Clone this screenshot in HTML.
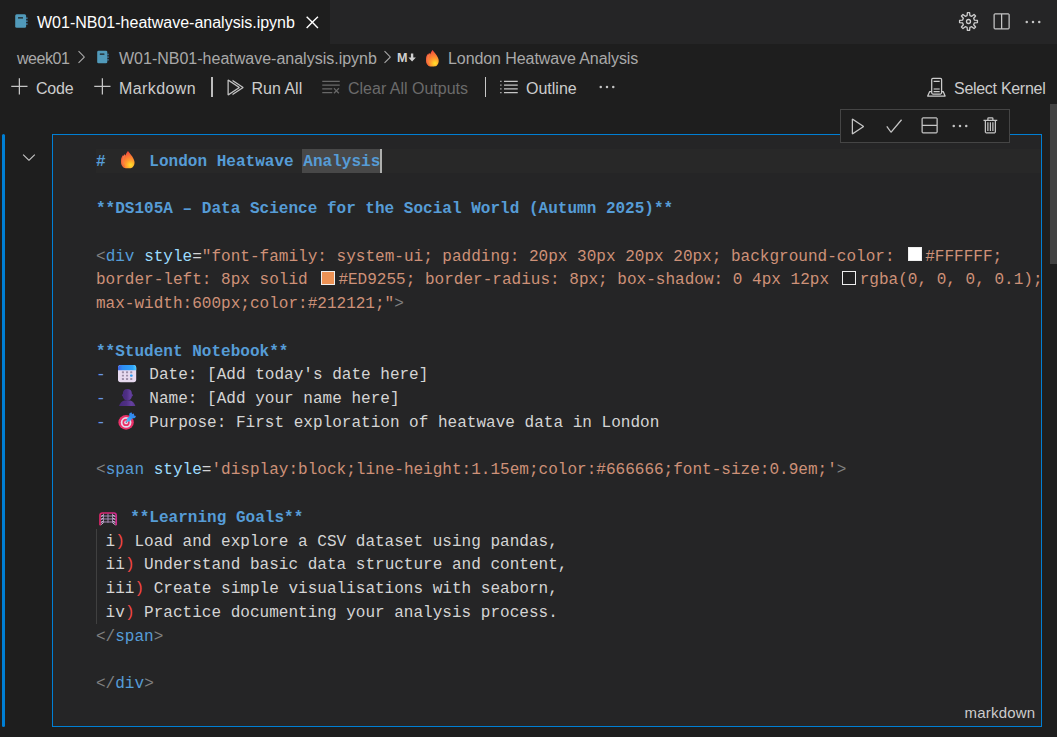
<!DOCTYPE html>
<html>
<head>
<meta charset="utf-8">
<title>W01-NB01-heatwave-analysis.ipynb</title>
<style>
html,body{margin:0;padding:0;}
body{width:1057px;height:737px;overflow:hidden;background:#1e1e1e;position:relative;
  font-family:"Liberation Sans",sans-serif;font-size:16px;color:#cccccc;}
.abs{position:absolute;}
.t{position:absolute;white-space:pre;line-height:20px;height:20px;}
svg{position:absolute;display:block;overflow:visible;}
/* tab bar */
#tabbar{left:0;top:0;width:1057px;height:44px;background:#252526;}
#tab{left:0;top:0;width:330px;height:44px;background:#1e1e1e;}
/* editor */
#focusbar{left:2px;top:133.5px;width:3px;height:593.5px;background:#007fd4;border-radius:1.5px;}
#cell{left:52px;top:134px;width:988px;height:591px;border:1px solid #007fd4;background:#252526;}
#linehl{left:95.5px;top:149px;width:945.5px;height:23.6px;background:#282828;}
#code{left:96px;top:150.5px;font-family:"Liberation Mono",monospace;font-size:16.047px;line-height:23.75px;color:#d4d4d4;}
#code .l{height:23.75px;position:relative;white-space:pre;}
.b{color:#569cd6;font-weight:bold;}
.tg{color:#569cd6;}
.p{color:#808080;}
.a{color:#9cdcfe;}
.s{color:#ce9178;}
.li{color:#6796e6;}
.r{color:#f44747;}
.em{display:inline-block;width:24.5px;height:20px;vertical-align:top;}
.sw{display:inline-block;box-sizing:border-box;width:14.1px;height:14.5px;margin:0 3.5px;border:1.5px solid #eeeeee;vertical-align:top;position:relative;top:1.25px;}
#celltb{left:840px;top:109px;width:168px;height:32px;border:1px solid #454545;background:#1e1e1e;}
#scroll{left:1050px;top:104px;width:7px;height:160px;background:#424242;}
</style>
</head>
<body>

<!-- TAB BAR -->
<div class="abs" id="tabbar"></div>
<div class="abs" id="tab"></div>
<svg id="nbicon1" style="left:15px;top:14px" width="14" height="14" viewBox="0 0 14 14">
  <rect x="0.2" y="0.2" width="10.9" height="13.6" rx="1.5" fill="#519aba"/>
  <g fill="#4a96c8" opacity="0.75"><rect x="11.1" y="3.4" width="1.5" height="1.7"/><rect x="11.1" y="6.3" width="1.5" height="1.7"/><rect x="11.1" y="9.2" width="1.5" height="1.7"/></g>
  <rect x="3" y="3.300" width="5" height="1.300" rx=".3" fill="#1e1e1e"/>
</svg>
<div class="t" id="tabtitle" style="left:37px;top:13px;color:#ffffff;">W01-NB01-heatwave-analysis.ipynb</div>
<svg id="tabclose" style="left:301px;top:10.6px" width="22.6" height="22.6" viewBox="0 0 16 16"><path fill="#ffffff" d="M8 8.707l3.646 3.647.708-.707L8.707 8l3.647-3.646-.707-.708L8 7.293 4.354 3.646l-.707.708L7.293 8l-3.646 3.646.707.708L8 8.707z"/></svg>

<!-- top-right actions -->
<svg id="gear" style="left:958.9px;top:12px" width="19" height="19" viewBox="0 0 19 19" fill="none" stroke="#cccccc" stroke-width="1.3">
  <circle cx="9.5" cy="9.5" r="2"/>
  <path d="M8.13 3.56 L8.40 0.57 L10.60 0.57 L10.87 3.56 L12.73 4.33 L15.04 2.41 L16.59 3.96 L14.67 6.27 L15.44 8.13 L18.43 8.40 L18.43 10.60 L15.44 10.87 L14.67 12.73 L16.59 15.04 L15.04 16.59 L12.73 14.67 L10.87 15.44 L10.60 18.43 L8.40 18.43 L8.13 15.44 L6.27 14.67 L3.96 16.59 L2.41 15.04 L4.33 12.73 L3.56 10.87 L0.57 10.60 L0.57 8.40 L3.56 8.13 L4.33 6.27 L2.41 3.96 L3.96 2.41 L6.27 4.33Z" stroke-linejoin="round"/>
</svg>
<svg id="splited" style="left:991.3px;top:12px" width="20" height="20" viewBox="0 0 16 16"><path fill="#c5c5c5" d="M14 1H3L2 2v11l1 1h11l1-1V2l-1-1zM8 13H3V2h5v11zm6 0H9V2h5v11z"/></svg>
<svg id="more1" style="left:1023px;top:12px" width="20" height="20" viewBox="0 0 16 16"><path fill="#c5c5c5" d="M4 8a1 1 0 1 1-2 0 1 1 0 0 1 2 0zm5 0a1 1 0 1 1-2 0 1 1 0 0 1 2 0zm5 0a1 1 0 1 1-2 0 1 1 0 0 1 2 0z"/></svg>

<!-- BREADCRUMBS -->
<div class="t" id="bc1" style="left:17px;top:49px;color:#a9a9a9;letter-spacing:-0.45px;">week01</div>
<svg id="bcch1" style="left:71.3px;top:47px" width="20" height="20" viewBox="0 0 16 16"><path fill="#a9a9a9" d="M10.072 8.024L5.715 3.667l.618-.62L11 7.716v.618L6.333 13l-.618-.619 4.357-4.357z"/></svg>
<svg id="nbicon2" style="left:97px;top:50px" width="13" height="14" viewBox="0 0 14 14">
  <rect x="0.2" y="0.2" width="10.9" height="13.6" rx="1.5" fill="#519aba"/>
  <g fill="#4a96c8" opacity="0.75"><rect x="11.1" y="3.4" width="1.5" height="1.7"/><rect x="11.1" y="6.3" width="1.5" height="1.7"/><rect x="11.1" y="9.2" width="1.5" height="1.7"/></g>
  <rect x="3" y="3.300" width="5" height="1.300" rx=".3" fill="#1e1e1e"/>
</svg>
<div class="t" id="bc2" style="left:119px;top:49px;color:#a9a9a9;">W01-NB01-heatwave-analysis.ipynb</div>
<svg id="bcch2" style="left:376.8px;top:47px" width="20" height="20" viewBox="0 0 16 16"><path fill="#a9a9a9" d="M10.072 8.024L5.715 3.667l.618-.62L11 7.716v.618L6.333 13l-.618-.619 4.357-4.357z"/></svg>
<div class="t" id="mdicon" style="left:397px;top:48px;font-weight:bold;font-size:12.6px;color:#d0d0d0;">M</div>
<svg id="mdarrow" style="left:407.8px;top:53px" width="8.2" height="9" viewBox="0 0 9 9"><path fill="#d0d0d0" d="M3.2 0h2.6v4.6H8.6L4.5 9 .4 4.6h2.8z"/></svg>
<svg id="bcfire" style="left:425.6px;top:49.6px" width="12.7" height="16.4" viewBox="0 0 13.5 17.25" preserveAspectRatio="none"><use href="#fireg"/></svg>
<div class="t" id="bc3" style="left:448px;top:49px;color:#a9a9a9;letter-spacing:-0.08px;">London Heatwave Analysis</div>

<!-- NOTEBOOK TOOLBAR -->
<svg id="plus1" style="left:9.5px;top:77px" width="20" height="20" viewBox="0 0 16 16"><path fill="#c5c5c5" d="M14 7v1H8v6H7V8H1V7h6V1h1v6h6z"/></svg>
<div class="t" id="tb1" style="left:36px;top:79px;letter-spacing:-0.2px;">Code</div>
<svg id="plus2" style="left:92.5px;top:77px" width="20" height="20" viewBox="0 0 16 16"><path fill="#c5c5c5" d="M14 7v1H8v6H7V8H1V7h6V1h1v6h6z"/></svg>
<div class="t" id="tb2" style="left:119px;top:79px;letter-spacing:0.4px;">Markdown</div>
<div class="abs" style="left:211px;top:77px;width:2px;height:20px;background:#bdbdbd;"></div>
<svg id="runall" style="left:225px;top:77px" width="20" height="20" viewBox="0 0 16 16"><path fill="#c5c5c5" d="M2.78 2L2 2.41v12l.78.42 9-6V8l-9-6zM3 13.48V3.35l7.6 5.07L3 13.48z"/><path fill="#c5c5c5" d="M6 14.683l8.78-5.853V8L6 2.147V3.35l7.6 5.07L6 13.48v1.203z"/></svg>
<div class="t" id="tb3" style="left:251.5px;top:79px;">Run All</div>
<svg id="clearall" style="left:321px;top:77px" width="20" height="20" viewBox="0 0 16 16"><path fill="#686868" d="M10 12.6l.7.7 1.6-1.6 1.6 1.6.8-.7L13 11l1.700-1.6-.8-.8-1.600 1.700-1.600-1.700-.7.8 1.600 1.600-1.600 1.600zM1 4h14V3H1v1zm0 3h14V6H1v1zm8 2.500V9H1v1h8v-.5zM9 13v-1H1v1h8z"/></svg>
<div class="t" id="tb4" style="left:348px;top:79px;color:#6b6b6b;">Clear All Outputs</div>
<div class="abs" style="left:485px;top:77px;width:1px;height:20px;background:#c8c8c8;"></div>
<svg id="outline" style="left:499px;top:77px" width="20" height="20" viewBox="0 0 16 16"><path fill="#c5c5c5" d="M2 3H1v1h1V3zm0 3H1v1h1V6zM1 9h1v1H1V9zm1 3H1v1h1v-1zm2-9h11v1H4V3zm11 3H4v1h11V6zM4 9h11v1H4V9zm11 3H4v1h11v-1z"/></svg>
<div class="t" id="tb5" style="left:526px;top:79px;">Outline</div>
<svg id="more2" style="left:597px;top:77px" width="20" height="20" viewBox="0 0 16 16"><path fill="#c5c5c5" d="M4 8a1 1 0 1 1-2 0 1 1 0 0 1 2 0zm5 0a1 1 0 1 1-2 0 1 1 0 0 1 2 0zm5 0a1 1 0 1 1-2 0 1 1 0 0 1 2 0z"/></svg>
<svg id="kernel" style="left:927px;top:77px" width="20" height="20" viewBox="0 0 20 20" fill="none" stroke="#cccccc" stroke-width="1.25">
  <rect x="4.7" y="1.4" width="9.9" height="15.6" rx="1.2"/>
  <path d="M4.700 14.500H2.700L.7 19.100H18.100L16.200 14.500H14.600" stroke-linejoin="round"/>
  <path d="M6.600 4.400h6.100M6.600 14.500h6.100"/><path d="M6.600 12h6.100" stroke="#9a9a9a" stroke-width="1.6"/>
</svg>
<div class="t" id="tb6" style="left:954px;top:79px;letter-spacing:-0.29px;">Select Kernel</div>

<!-- CELL -->
<div class="abs" id="focusbar"></div>
<svg id="collapse" style="left:19px;top:147px" width="20" height="20" viewBox="0 0 16 16"><path fill="#c5c5c5" d="M7.976 10.072l4.357-4.357.62.618L8.284 11h-.618L3 6.333l.619-.618 4.357 4.357z"/></svg>
<div class="abs" id="cell"></div>
<div class="abs" id="linehl"></div>
<div class="abs" id="selhl" style="left:302px;top:149px;width:78px;height:23.75px;background:#484848;"></div>
<div class="abs" id="cursor" style="left:380px;top:149px;width:2px;height:23.75px;background:#aeafad;"></div>
<div class="abs" id="guide" style="left:96px;top:528.75px;width:1px;height:95px;background:#404040;"></div>

<svg width="0" height="0" style="position:absolute">
  <defs>
    <radialGradient id="fg1" gradientUnits="userSpaceOnUse" cx="9.6" cy="14" r="13.5"><stop offset="0" stop-color="#ffe22e"/><stop offset="0.15" stop-color="#ffc52a"/><stop offset="0.36" stop-color="#ff9c2e"/><stop offset="0.62" stop-color="#fb7a33"/><stop offset="0.85" stop-color="#f55e3a"/><stop offset="1" stop-color="#f0463c"/></radialGradient>
    <g id="fireg">
      <path fill="url(#fg1)" d="M6.940 0C8 1.200 9.200 2.800 9.900 3.800C11 5.200 12 6.600 12.600 7.900C13.300 9.200 13.600 10.400 13.560 11.600C13.500 13.500 12.800 15.200 11.600 16.300C10.800 17 10 17.250 8.500 17.250H5C3.500 17.250 2.600 16.800 1.700 15.600C.5 14 0 12.300 0 10.500C0 8.500 .5 6.300 1.700 4.450L2.500 5L3.200 3.200L4.500 4.400C5 2.800 6 1.200 6.940 0Z"/>
      <path fill="#ef5f3c" opacity="0.6" d="M3.200 3.200L4.500 4.400C3.600 6.500 3 8.500 3 11C3 13.500 3.600 15.600 4.800 17.240C3.400 17.200 2.500 16.700 1.700 15.600C.5 14 0 12.300 0 10.500C0 8.500 .5 6.300 1.700 4.450L2.500 5Z"/>
      <path fill="none" stroke="#ff9b55" stroke-width=".5" opacity=".8" d="M2.600 5.200C1.600 8 1.400 11 2.400 14M3.600 4.300C2.700 7 2.400 10 3 13"/>
    </g>
    <linearGradient id="calg" x1="0" y1="0" x2="1" y2="0"><stop offset="0" stop-color="#3d62e6"/><stop offset="0.25" stop-color="#2f8df2"/><stop offset="0.8" stop-color="#2fa4f8"/><stop offset="1" stop-color="#4fcbff"/></linearGradient>
    <linearGradient id="usrg" x1="0" y1="0" x2="1" y2="0"><stop offset="0" stop-color="#45297a"/><stop offset="0.45" stop-color="#4f2f84"/><stop offset="0.75" stop-color="#64409e"/><stop offset="1" stop-color="#5a3892"/></linearGradient>
    <linearGradient id="dartg" x1="0" y1="1" x2="1" y2="0"><stop offset="0" stop-color="#4fc8ff"/><stop offset="0.5" stop-color="#2f90f0"/><stop offset="1" stop-color="#3a7be8"/></linearGradient>
    <linearGradient id="goalg" gradientUnits="userSpaceOnUse" x1="0" y1="0" x2="18.2" y2="0"><stop offset="0" stop-color="#dc2668"/><stop offset="1" stop-color="#cc2c8e"/></linearGradient>
  </defs>
</svg>


<!-- emoji -->
<svg id="emfire" style="left:120.5px;top:150.75px" width="13.5" height="17.25" viewBox="0 0 13.5 17.25"><use href="#fireg"/></svg>
<svg id="emcal" style="left:118.1px;top:364.9px" width="18.2" height="17.3" viewBox="0 0 18.2 17.3">
  <rect x="0" y="0" width="18.2" height="17.3" rx="2.7" fill="#e7daef"/>
  <path d="M0 5.200V2.700A2.700 2.700 0 0 1 2.700 0H15.500A2.700 2.700 0 0 1 18.200 2.700V5.200Z" fill="url(#calg)"/>
  <g fill="#9c8ea8"><rect x="3.9" y="6.3" width="2.1" height="1.9" rx=".5"/><rect x="8" y="6.3" width="2.1" height="1.9" rx=".5"/><rect x="12.2" y="6.3" width="2.1" height="1.9" rx=".5"/>
  <rect x="3.9" y="9.8" width="2.1" height="1.8" rx=".5"/><rect x="8" y="9.8" width="2.1" height="1.8" rx=".5"/>
  <rect x="3.9" y="13" width="2.1" height="1.9" rx=".5"/><rect x="8" y="13" width="2.1" height="1.9" rx=".5"/><rect x="12.2" y="13" width="2.1" height="1.9" rx=".5"/></g>
  <rect x="12" y="9.500" width="2.700" height="2.200" rx="1" fill="#2b9cf4"/>
</svg>
<svg id="emuser" style="left:119px;top:388.9px" width="16.4" height="17.1" viewBox="0 0 16.4 17.1">
  <path fill="url(#usrg)" d="M8.300 0C10.900 0 12.900 1.600 12.900 4.200V5.200C13.600 5.200 14 5.700 14 6.300C14 6.900 13.600 7.300 12.900 7.400C12.700 9.600 11.200 11.400 8.300 11.700C5.600 11.400 4.100 9.600 3.900 7.400C3.300 7.300 2.900 6.900 2.900 6.300C2.900 5.700 3.300 5.200 3.900 5.200V4.200C3.900 1.600 5.800 0 8.300 0Z"/>
  <path fill="url(#usrg)" d="M0 17.100C.8 14.500 2.800 12.200 5.200 11.500H11.400C13.800 12.200 15.700 14.500 16.400 17.100Z"/>
</svg>
<svg id="emtarget" style="left:118px;top:411.5px" width="18.5" height="18.5" viewBox="0 0 18.5 18.5">
  <ellipse cx="8.100" cy="10.400" rx="7.700" ry="7.350" fill="#ea3068"/>
  <circle cx="8.100" cy="10.400" r="5.300" fill="#e4d8ec"/>
  <circle cx="8.100" cy="10.400" r="3.600" fill="#ef2f66"/>
  <circle cx="8.100" cy="10.400" r="1.900" fill="#e4d8ec"/>
  <circle cx="8.300" cy="10.100" r=".8" fill="#6b5a78"/>
  <path fill="url(#dartg)" d="M8.500 10L9 6.500L11.300 4.400L11.300 1.400L13.400.2L14.200 2L16 1.400L16.100 3.400L18 3.900L17 6L14.400 6.400L11.800 9.200Z"/>
</svg>
<svg id="emgoal" style="left:99.1px;top:511.8px" width="18.2" height="13.3" viewBox="0 0 18.2 13.3">
  <g stroke="#a48cb6" stroke-width="1" fill="none">
    <path d="M4.400 1.500V10.800M9 1.500V10.800M13.600 1.500V10.800M2 4H16.200M2 7H16.200M2 10H16.200"/>
    <path d="M1.500 4.800L4.400 3M1.500 7.800L4.400 6M1.500 10.800L4.400 9M1.500 13L4.400 10.800M16.700 4.800L13.600 3M16.700 7.800L13.600 6M16.700 10.800L13.600 9M16.700 13L13.600 10.800" stroke="#cdbdd8"/>
  </g>
  <path d="M1 13.300V3.200A2.200 2.200 0 0 1 3.200 1H15A2.200 2.200 0 0 1 17.200 3.200V13.300" fill="none" stroke="url(#goalg)" stroke-width="1.7"/>
</svg>

<div class="abs" id="code">
<div class="l"><span class="b"># </span><span class="em"></span><span class="b"> London Heatwave Analysis</span></div>
<div class="l"></div>
<div class="l"><span class="b">**DS105A – Data Science for the Social World (Autumn 2025)**</span></div>
<div class="l"></div>
<div class="l"><span class="p">&lt;</span><span class="tg">div</span> <span class="a">style</span>=<span class="s">"font-family: system-ui; padding: 20px 30px 20px 20px; background-color: <span class="sw" style="background:#ffffff"></span>#FFFFFF;</span></div>
<div class="l"><span class="s">border-left: 8px solid <span class="sw" style="background:#ED9255"></span>#ED9255; border-radius: 8px; box-shadow: 0 4px 12px <span class="sw" style="background:rgba(0,0,0,0.1)"></span>rgba(0, 0, 0, 0.1);</span></div>
<div class="l"><span class="s">max-width:600px;color:#212121;"</span><span class="p">&gt;</span></div>
<div class="l"></div>
<div class="l"><span class="b">**Student Notebook**</span></div>
<div class="l"><span class="li">-</span> <span class="em"></span> Date: [Add today's date here]</div>
<div class="l"><span class="li">-</span> <span class="em"></span> Name: [Add your name here]</div>
<div class="l"><span class="li">-</span> <span class="em"></span> Purpose: First exploration of heatwave data in London</div>
<div class="l"></div>
<div class="l"><span class="p">&lt;</span><span class="tg">span</span> <span class="a">style</span>=<span class="s">'display:block;line-height:1.15em;color:#666666;font-size:0.9em;'</span><span class="p">&gt;</span></div>
<div class="l"></div>
<div class="l"><span class="em"></span> <span class="b">**Learning Goals**</span></div>
<div class="l"> i<span class="r">)</span> Load and explore a CSV dataset using pandas,</div>
<div class="l"> ii<span class="r">)</span> Understand basic data structure and content,</div>
<div class="l"> iii<span class="r">)</span> Create simple visualisations with seaborn,</div>
<div class="l"> iv<span class="r">)</span> Practice documenting your analysis process.</div>
<div class="l"><span class="p">&lt;/</span><span class="tg">span</span><span class="p">&gt;</span></div>
<div class="l"></div>
<div class="l"><span class="p">&lt;/</span><span class="tg">div</span><span class="p">&gt;</span></div>
</div>

<div class="t" id="lang" style="left:964.5px;top:703px;font-size:15px;letter-spacing:0.2px;">markdown</div>

<!-- cell toolbar -->
<div class="abs" id="celltb"></div>
<svg id="ct1" style="left:848px;top:116px" width="20" height="20" viewBox="0 0 16 16"><path fill="#c5c5c5" d="M3.78 2L3 2.41v12l.78.42 9-6V8l-9-6zM4 13.48V3.35l7.6 5.07L4 13.48z"/></svg>
<svg id="ct2" style="left:884px;top:116px" width="20" height="20" viewBox="0 0 16 16"><path fill="#c5c5c5" d="M14.431 3.323l-8.47 10-.79-.036-3.35-4.77.818-.574 2.978 4.24 8.051-9.506.764.646z"/></svg>
<svg id="ct3" style="left:919px;top:116px" width="20" height="20" viewBox="0 0 16 16"><path fill="#c5c5c5" d="M14 1H3L2 2v11l1 1h11l1-1V2l-1-1zm0 12H3V8h11v5zm0-6H3V2h11v5z"/></svg>
<svg id="ct4" style="left:950px;top:116px" width="20" height="20" viewBox="0 0 16 16"><path fill="#c5c5c5" d="M4 8a1 1 0 1 1-2 0 1 1 0 0 1 2 0zm5 0a1 1 0 1 1-2 0 1 1 0 0 1 2 0zm5 0a1 1 0 1 1-2 0 1 1 0 0 1 2 0z"/></svg>
<svg id="ct5" style="left:981px;top:116px" width="20" height="20" viewBox="0 0 16 16"><path fill="#c5c5c5" d="M10 3h3v1h-1v9l-1 1H4l-1-1V4H2V3h3V2a1 1 0 0 1 1-1h3a1 1 0 0 1 1 1v1zM9 2H6v1h3V2zM4 13h7V4H4v9zm2-8H5v7h1V5zm1 0h1v7H7V5zm2 0h1v7H9V5z"/></svg>

<div class="abs" id="scroll"></div>
</body>
</html>
